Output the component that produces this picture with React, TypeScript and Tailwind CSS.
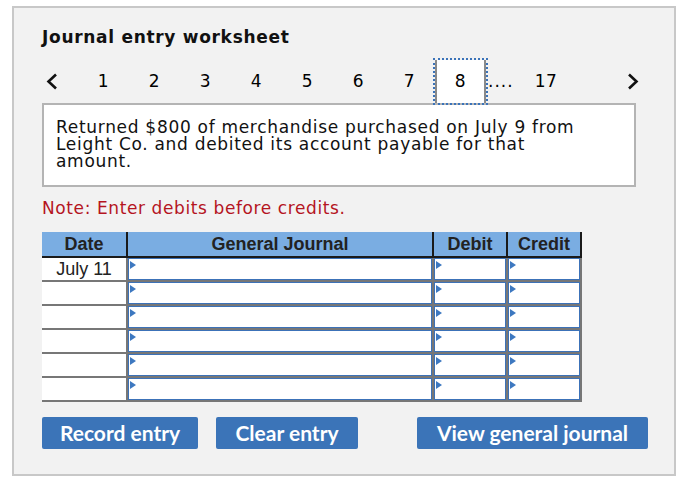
import React from "react";

const verdana = { fontFamily: '"DejaVu Sans", Verdana, sans-serif' };
const arial = { fontFamily: '"Liberation Sans", Arial, sans-serif' };
const lato = { fontFamily: 'Lato, "Open Sans", sans-serif' };

function Tri() {
  return (
    <svg className="absolute left-[1px] top-[2px]" width="6" height="8" viewBox="0 0 6 8">
      <polygon points="0,0 6,4 0,8" fill="#3d78c0" />
    </svg>
  );
}

function InputCell() {
  return (
    <div className="relative bg-white border border-[#3c72b8] h-[22px]">
      <Tri />
    </div>
  );
}

export default function App() {
  const rows = ["July 11", "", "", "", "", ""];
  const nums = [1, 2, 3, 4, 5, 6, 7, 8];
  return (
    <div className="w-[684px] h-[486px] bg-white pt-[6px] pl-[12px]">
      <div
        className="w-[664px] h-[470px] bg-[#f2f2f2] border-2 border-[#c8c8c8] pl-[28px] pt-[20px] text-black"
        style={verdana}
      >
        <div className="text-[17px] font-bold leading-[19px] tracking-[0.7px] text-[#111]">Journal entry worksheet</div>

        <div className="flex items-center h-[43px] w-[598px] mt-[13px] text-[17px] tracking-[0.5px]">
          <div className="w-[36px] pl-[4px] flex items-center">
            <svg width="12" height="17" viewBox="0 0 12 17">
              <polyline points="10,1.5 2.5,8.5 10,15.5" fill="none" stroke="#111" strokeWidth="2.6" />
            </svg>
          </div>
          {nums.map((n) =>
            n === 8 ? (
              <div
                key={n}
                className="w-[51px] h-[43px] flex items-center justify-center bg-white border-x-2 border-[#8a8a8a] outline-2 outline-dotted outline-[#3b73b9]"
              >
                {n}
              </div>
            ) : (
              <div key={n} className="w-[51px] h-[43px] flex items-center justify-center">
                {n}
              </div>
            )
          )}
          <div className="ml-[2px] tracking-[1px]">....</div>
          <div className="ml-[21px]">17</div>
          <div className="ml-auto flex items-center pr-[1px]">
            <svg width="12" height="17" viewBox="0 0 12 17">
              <polyline points="2,1.5 9.5,8.5 2,15.5" fill="none" stroke="#111" strokeWidth="2.6" />
            </svg>
          </div>
        </div>

        <div className="w-[594px] h-[84px] bg-white border-2 border-[#b4b4b4] pl-[12px] pr-[48px] pt-[14px] text-[17px] leading-[17px] tracking-[0.7px] text-[#111]">
          Returned $800 of merchandise purchased on July 9 from Leight Co. and debited its account payable for that
          amount.
        </div>

        <div className="mt-[13px] text-[17px] leading-[17px] tracking-[0.6px] text-[#b5151f]">
          Note: Enter debits before credits.
        </div>

        <div className="mt-[15px] w-[540px]" style={arial}>
          <div className="grid grid-cols-[84px_304px_72px_72px] gap-x-[2px] bg-[#1a1a1a] pr-[2px] pb-[2px]">
            {["Date", "General Journal", "Debit", "Credit"].map((h) => (
              <div
                key={h}
                className="bg-[#7aade2] h-[24px] flex items-center justify-center text-[18px] font-bold text-[#222]"
              >
                {h}
              </div>
            ))}
          </div>
          <div className="grid grid-cols-[84px_304px_72px_72px] gap-[2px] bg-[#777777] pr-[2px] pb-[2px]">
            {rows.map((d, i) => (
              <React.Fragment key={i}>
                <div className="bg-white h-[22px] flex items-center justify-center text-[18px] text-[#222]">{d}</div>
                <InputCell />
                <InputCell />
                <InputCell />
              </React.Fragment>
            ))}
          </div>
        </div>

        <div className="flex mt-[15px]" style={lato}>
          <button className="w-[156px] h-[32px] bg-[#3b74b8] rounded-[2px] text-white text-[21px] font-bold">
            Record entry
          </button>
          <button className="ml-[18px] w-[142px] h-[32px] bg-[#3b74b8] rounded-[2px] text-white text-[21px] font-bold">
            Clear entry
          </button>
          <button className="ml-[59px] w-[231px] h-[32px] bg-[#3b74b8] rounded-[2px] text-white text-[21px] font-bold">
            View general journal
          </button>
        </div>
      </div>
    </div>
  );
}
